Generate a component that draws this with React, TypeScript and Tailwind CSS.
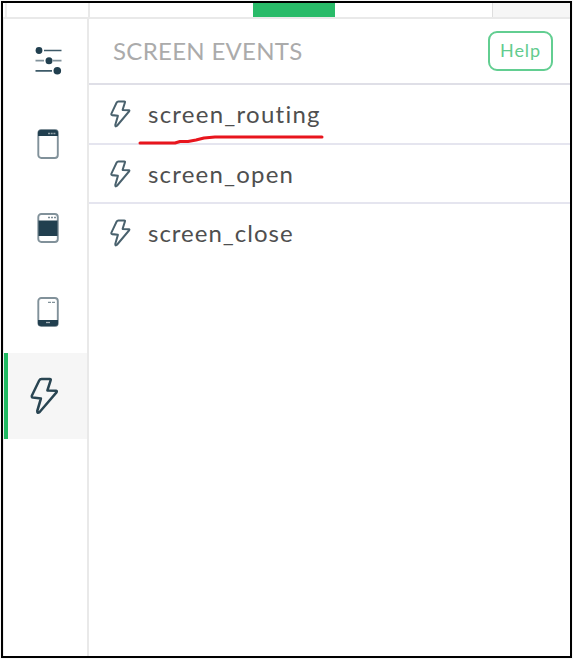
import React from "react";

const BOLT = "M12 2 L20.500 2 Q21.800 2 21.400 3.200 L18 13.500 L27 13.800 Q28.300 14 27.400 15.300 L10 35 Q7.400 37 7.500 34 L11.300 21.500 L3 20.500 Q1.400 20.200 2 18.500 L9.500 3.500 Q10.300 2 12 2 Z";

function Bolt({ className, stroke, width }: { className: string; stroke: string; width: number }) {
  return (
    <svg viewBox="0 0 30 38" preserveAspectRatio="none" className={className} fill="none" stroke={stroke} strokeWidth={width} strokeLinejoin="round">
      <path d={BOLT} />
    </svg>
  );
}

function Sliders() {
  return (
    <svg viewBox="0 0 28 30" className="h-[30px] w-[28px]" fill="#213f4f" stroke="#3d5a68" strokeWidth="1.7">
      <path d="M9 4.5H26.5M.5 24.8H17" />
      <path d="M.5 14.7H9M18 14.7h8.500" stroke="#81929b" />
      <g stroke="none">
        <circle cx="4" cy="4.500" r="3.400" />
        <circle cx="14" cy="14.700" r="3.500" />
        <circle cx="22.300" cy="24.800" r="3.800" />
      </g>
    </svg>
  );
}

function Phone({ variant }: { variant: "header" | "body" | "footer" }) {
  return (
    <svg viewBox="0 0 22 30" className="h-[30px] w-[22px]">
      <rect x="1.300" y="1" width="19.500" height="28" rx="3" fill="#fff" stroke="#81919a" strokeWidth="1.900" />
      {variant === "header" && (
        <g>
          <path d="M1 7V3.500Q1 1 3.500 1h15Q21 1 21 3.500V7Z" fill="#213f4f" />
          <path d="M11 4.500h8" stroke="#94a3aa" strokeWidth="1.500" strokeDasharray="2 .7" />
        </g>
      )}
      {variant === "body" && (
        <g>
          <path d="M1.500 7.500h19v15.500h-19Z" fill="#213f4f" />
          <path d="M11 4.500h8" stroke="#7c8c95" strokeWidth="1.300" strokeDasharray="2 1" />
        </g>
      )}
      {variant === "footer" && (
        <g>
          <path d="M1 23h20v3.500Q21 29 18.500 29h-15Q1 29 1 26.500Z" fill="#213f4f" />
          <path d="M11 5.300h7.500" stroke="#82929a" strokeWidth="1.300" strokeDasharray="3 1" />
          <path d="M9 25.500h4" stroke="#a6b1b7" strokeWidth="1.300" />
        </g>
      )}
    </svg>
  );
}

function EventRow({ name, rowClass, textClass }: { name: string; rowClass: string; textClass: string }) {
  return (
    <div className={"flex items-center pl-[21px] " + rowClass}>
      <Bolt className="h-[28px] w-[21px] shrink-0" stroke="#49616d" width={2.8} />
      <span className={"ml-[17px] whitespace-nowrap text-[24px] leading-7 text-[#4f4f4f] " + textClass}>{name}</span>
    </div>
  );
}

export default function App() {
  return (
    <div className="h-[659px] w-[573px] bg-[#f7f7f7] p-px font-['Lato',sans-serif]">
      <div className="flex h-[657px] w-[571px] flex-col border-2 border-black bg-white">
        <div className="flex h-4 shrink-0 border-b-2 border-[#e9e9e9] pl-[2px]">
          <div className="w-[85px] border-x-2 border-[#ededed] border-r-[#e9e9e9]" />
          <div className="w-[163px]" />
          <div className="w-[82px] bg-[#29bb69]" />
          <div className="w-[157px]" />
          <div className="flex-1 border-l border-[#dedede] bg-[#f6f6f6]" />
        </div>
        <div className="flex min-h-0 flex-1">
          <nav className="flex w-[86px] shrink-0 flex-col border-x border-l-[#ededed] border-r-2 border-r-[#e9e9e9]">
            <div className="flex h-[84px] items-center justify-center pl-[6px]"><Sliders /></div>
            <div className="flex h-[81px] items-center justify-center pl-[5px]"><Phone variant="header" /></div>
            <div className="flex h-[87px] items-center justify-center pl-[5px]"><Phone variant="body" /></div>
            <div className="flex h-[82px] items-center justify-center pl-[5px]"><Phone variant="footer" /></div>
            <div className="flex h-[86px] items-center border-l-4 border-[#20ba62] bg-[#f6f6f6] pl-[22px]">
              <Bolt className="h-[38px] w-[29px]" stroke="#294552" width={2.6} />
            </div>
          </nav>
          <main className="min-w-0 flex-1">
            <header className="flex h-[66px] items-center justify-between border-b-2 border-[#dfdfe7] pr-[17px] pl-6">
              <h1 className="text-[24px] leading-7 tracking-[.3px] whitespace-nowrap text-[#ababab]">SCREEN EVENTS</h1>
              <button className="h-10 w-[65px] rounded-[9px] border-2 border-[#62ce91] pb-0.5 text-[18px] leading-5 tracking-[.9px] text-[#62cb8e]">Help</button>
            </header>
            <div className="relative">
              <EventRow name="screen_routing" rowClass="h-[60px] border-b-2 border-[#e5e5ef]" textClass="tracking-[1.25px]" />
              <svg className="absolute top-[47px] left-[49px] h-[14px] w-[188px]" viewBox="0 0 188 14" fill="none" stroke="#e8151d" strokeWidth="3" strokeLinecap="round" strokeLinejoin="round">
                <path d="M2 11H37L42 9.500H50L58 8L66 6L77 5H184" />
              </svg>
            </div>
            <EventRow name="screen_open" rowClass="h-[59px] border-b-2 border-[#e5e5ef]" textClass="tracking-[1.2px]" />
            <EventRow name="screen_close" rowClass="h-[58px]" textClass="tracking-[1px]" />
          </main>
        </div>
      </div>
    </div>
  );
}
